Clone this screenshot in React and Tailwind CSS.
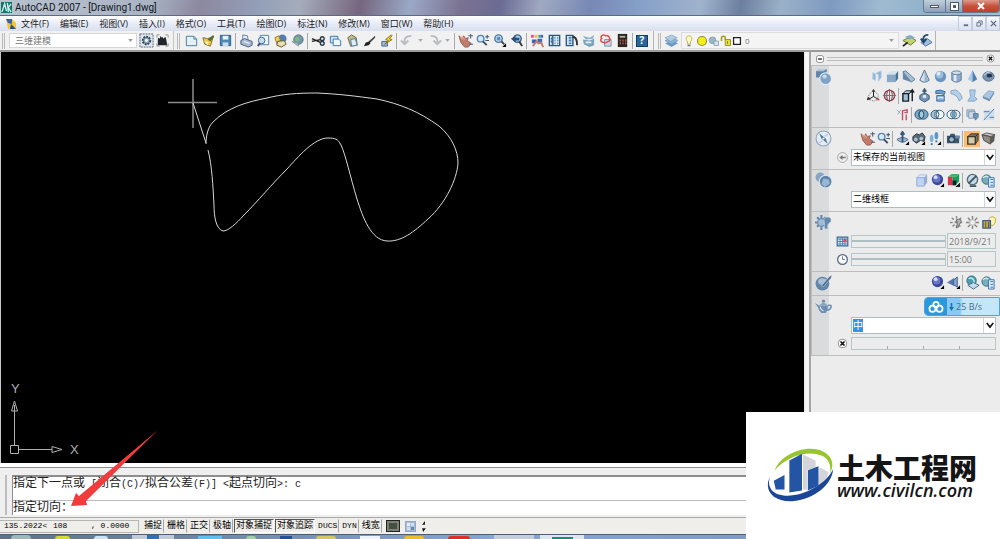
import React, { useState } from "react";
import clsx from "clsx";

/* 16x16 icon drawings, keyed by command */
const glyphs = {
  gear: (
    <>
      <rect x="1" y="1" width="14" height="14" fill="#dfe6ec" stroke="#50606e" strokeDasharray="2 1" />
      <circle cx="8" cy="8" r="4" fill="#8ba7bd" stroke="#2f4354" strokeWidth="2" strokeDasharray="2 1" />
      <circle cx="8" cy="8" r="1.500" fill="#fff" />
    </>
  ),
  workspace: (
    <>
      <path d="M2 5V2h3M11 2h3v3M14 11v3h-3M5 14H2v-3" fill="none" stroke="#8e979e" />
      <path d="M3 13V6l1-1 1 1 1-3 1 2 1-1 1 2 2-2 1 3 1 6z" fill="#20262b" />
    </>
  ),
  newFile: <path d="M2.500 3.500h8l3 3v7h-11z M10.500 3.500v3h3" fill="#e4f2f8" stroke="#477c9b" />,
  open: (
    <>
      <path d="M2 5l5 1 6-2-3 10-6-2z" fill="#efc84a" stroke="#80702c" />
      <path d="M7 7l6-5 1 2-4 5z" fill="#5a6d31" />
      <path d="M3 8l5 2-1 3z" fill="#fff3b5" />
    </>
  ),
  save: (
    <>
      <path d="M2.500 2.500h11v11h-11z" fill="#4f87b5" stroke="#2a5e8c" />
      <path d="M5 3h6v4H5z" fill="#eaf3f8" />
      <path d="M5 10h6v4H5z" fill="#c9dcea" />
    </>
  ),
  print: (
    <>
      <path d="M4 2l5 1 1 6-6-1z" fill="#e8eef7" stroke="#667da5" />
      <path d="M2 8l4-2 8 3v4l-4 2-8-3z" fill="#a9b9d4" stroke="#4a5d82" />
      <path d="M5 9l6 2" stroke="#fff" />
    </>
  ),
  preview: (
    <>
      <path d="M4.500 2.500h9v10h-9z" fill="#edf4fa" stroke="#4d7faa" />
      <circle cx="6" cy="8" r="3.500" fill="#c5dff0" stroke="#3b658e" />
      <path d="M4 11l-2 3" stroke="#3b4d65" strokeWidth="2" />
    </>
  ),
  publish: (
    <>
      <circle cx="10" cy="6" r="4.500" fill="#4f7eb7" />
      <path d="M2 5l4-2 2 5-4 3z" fill="#f4cd55" stroke="#9a7a28" />
      <path d="M5 9l7-1 2 4-5 3-5-2z" fill="#e6dfb0" stroke="#64552b" />
    </>
  ),
  globe: (
    <>
      <circle cx="9" cy="7" r="5" fill="#6f9bb0" stroke="#506d7a" />
      <path d="M6 4l4 1-1 4-4-1z" fill="#89b86e" />
      <path d="M2 9l6 2 1 3z" fill="#cdd6dc" stroke="#8b969e" />
    </>
  ),
  cut: (
    <>
      <path d="M1 9l9-2M1 6l9 4" stroke="#222" strokeWidth="1.500" />
      <circle cx="12" cy="6" r="2" fill="none" stroke="#28394c" strokeWidth="1.500" />
      <circle cx="12" cy="11" r="2" fill="none" stroke="#28394c" strokeWidth="1.500" />
    </>
  ),
  copy: (
    <>
      <path d="M2.500 3.500h8v7h-8z" fill="#cfe1f3" stroke="#3b75ab" />
      <path d="M5.500 6.500h6l2 2v5h-8z" fill="#edf6fc" stroke="#3b75ab" />
    </>
  ),
  paste: (
    <>
      <path d="M3 5l4-3 5 3 1 8-7 1z" fill="#c4ba84" stroke="#6c6750" />
      <path d="M6 7l5-1 2 7-6 1z" fill="#dceefa" stroke="#4b7aa0" />
    </>
  ),
  brush: (
    <>
      <path d="M14 3L7 9l1 2 6-6z" fill="#444" />
      <path d="M8 9l-4 1-2 4 5-1 2-2z" fill="#222" />
    </>
  ),
  blockEdit: (
    <>
      <path d="M3 9h6v5H3z" fill="#9db9d8" stroke="#45648c" />
      <path d="M13 2L7 7l3 1-4 4 8-5-3-1 3-3z" fill="#f5d633" stroke="#8a7310" />
    </>
  ),
  undo: <path d="M12 3C6 3 4 6 5 11M1 8l4 4 4-4" fill="none" stroke="#b9bdc1" strokeWidth="2" />,
  redo: <path d="M4 3c6 0 8 3 7 8M7 8l4 4 4-4" fill="none" stroke="#b9bdc1" strokeWidth="2" />,
  pan: (
    <>
      <path d="M1 3l4 3 1-3 2 3 3-1-1 3 4 3-3 4H7L3 10z" fill="#c07c6b" stroke="#9c6254" />
      <path d="M2 3l3 4M4 3l3 4" stroke="#e6bcae" />
      <path d="M11 3h5M13.500 1v5M12 12h4" stroke="#345a86" />
    </>
  ),
  zoom: (
    <>
      <circle cx="6" cy="6" r="3.500" fill="#d6e9f6" stroke="#5786b1" strokeWidth="1.500" />
      <path d="M8.500 9l4 4" stroke="#3c4b59" strokeWidth="2" />
      <path d="M11 4h4M13 2v4M11 8h4" stroke="#2f4b66" />
    </>
  ),
  zoomWindow: (
    <>
      <circle cx="7" cy="6" r="4" fill="#d6e9f6" stroke="#4676a4" strokeWidth="1.500" />
      <path d="M5 4h4v4H5z" fill="#668db5" />
      <path d="M10 9l3 3" stroke="#3c4b59" strokeWidth="2" />
      <path d="M15 11v4h-4z" />
    </>
  ),
  zoomPrev: (
    <>
      <circle cx="9" cy="6" r="4" fill="#a9cbe5" stroke="#3b628a" strokeWidth="1.500" />
      <path d="M11 9l3 5" stroke="#333" strokeWidth="2" />
      <path d="M2 6l5-3v2h4v3H7v2z" fill="#2b4d77" />
    </>
  ),
  properties: (
    <>
      <path d="M1 2h3v3H1z" fill="#e94b9a" />
      <path d="M5 2h3v3H5z" fill="#e8c530" />
      <path d="M9 2h2v3H9z" fill="#38a56b" />
      <path d="M11 2h3v3h-3z" fill="#3d68d0" />
      <path d="M2 7h5v4H2zM8 6h5v4H8z" fill="#4063b5" />
      <path d="M3 14l4-5 2 2 3-1 2 5" fill="none" stroke="#c07e70" strokeWidth="2" />
    </>
  ),
  designCenter: (
    <>
      <path d="M2.500 2.500h11v11h-11z" fill="#e7eff6" stroke="#2b587f" strokeWidth="1.500" />
      <path d="M6 3v10M8 5h1M11 5h1M8 8h1M11 8h1M8 11h1M11 11h1M4 6h1M4 9h1" stroke="#3a6a95" strokeWidth="2" />
    </>
  ),
  toolPalette: (
    <>
      <path d="M2.500 2.500h7v11h-7z" fill="#dceaf5" stroke="#2b587f" strokeWidth="1.500" />
      <path d="M5 5h3M5 8h3M5 11h3" stroke="#4c84b5" strokeWidth="2" />
      <path d="M9 4c4 0 5 3 5 9" fill="none" stroke="#333" strokeWidth="2" />
    </>
  ),
  sheetSet: (
    <>
      <path d="M2 3l7 2 5-3-1 4-8 1z" fill="#90b4cb" />
      <path d="M2 7l7 1 5-2v7l-5 2-6-3z" fill="#7ba4bb" />
      <path d="M5 10h6" stroke="#e4f0f6" strokeWidth="2" />
    </>
  ),
  markup: (
    <>
      <path d="M7 7h7v7H7z" fill="#ccd8e5" stroke="#7c8fa8" />
      <path d="M4 3c2-2 4 0 4 0s4-1 4 2c2 2 0 4-1 4s-3 3-5 1c-3 0-4-3-2-4-1-1-1-2 0-3z" fill="none" stroke="#dd4646" strokeWidth="1.500" />
    </>
  ),
  calc: (
    <>
      <path d="M3 1h10v14H3z" fill="#2d2522" />
      <path d="M5 3h6v2H5z" fill="#a8b79c" />
      <path d="M5 8h1M8 8h1M11 8h1M5 11h1M8 11h1M11 11h1" stroke="#e07c6a" strokeWidth="2" />
    </>
  ),
  layers: (
    <>
      <path d="M1 11l8-3 6 3-7 4z" fill="#6f9ac4" />
      <path d="M1 8l8-3 6 3-7 4z" fill="#8fb4d6" stroke="#5c83a9" strokeWidth=".5" />
      <path d="M1 5l7-3 6 3-7 4z" fill="#b0cde6" stroke="#5f86ab" strokeWidth=".5" />
    </>
  ),
  bulb: (
    <>
      <path d="M8 1C4 1 3 6 6 9v3h4V9c3-3 2-8-2-8z" fill="#fffbc3" stroke="#b7a33f" />
      <path d="M6 14h4" stroke="#6c7c90" strokeWidth="2" />
    </>
  ),
  sun: <circle cx="8" cy="8" r="6" fill="#f4ee1c" stroke="#928e35" strokeWidth="1.500" />,
  freeze: (
    <>
      <circle cx="6" cy="7" r="4.500" fill="#9db6c9" stroke="#7e96a9" />
      <path d="M8 8h6v6H8z" fill="#d7e4ec" stroke="#7e96a9" />
    </>
  ),
  unlock: (
    <>
      <path d="M2 8V4c0-3 5-3 5 0v3" fill="none" stroke="#a1a11d" strokeWidth="2" />
      <path d="M7 6h7v8H7z" fill="#e6e12a" stroke="#807d1b" />
      <path d="M10 8v4" stroke="#666" />
    </>
  ),
  square: <path d="M2.500 2.500h11v11h-11z" fill="#fff" stroke="#222" strokeWidth="2" />,
  layerCurrent: (
    <>
      <path d="M1 8l8-4 6 4-6 5z" fill="#c5d36a" stroke="#6a7b38" />
      <path d="M3 4l6-2 5 3-6 2z" fill="#86a9c6" />
      <path d="M1 14l5-4" stroke="#222" strokeWidth="2" />
    </>
  ),
  layerPrev: (
    <>
      <path d="M3 10l7-4 5 4-7 4z" fill="#9dbfdf" stroke="#4c7299" />
      <path d="M11 2C6 2 5 5 6 9M3 6l3 4 3-4" fill="none" stroke="#20466f" strokeWidth="2" />
    </>
  ),
  polysolid: <path d="M4 4l3 1v7l-3-1zM8 4l5-2v7l-3 4V6L8 5z" fill="#8fb3da" stroke="#b7cfe6" />,
  box: (
    <>
      <path d="M2 6l4-4h8l-3 4z" fill="#d3e3f0" />
      <path d="M11 6l3-4v8l-3 4z" fill="#4b6f94" />
      <path d="M2 6h9v8H2z" fill="#89a9c7" />
    </>
  ),
  wedge: (
    <>
      <path d="M2 3l3-1 10 9-4 3z" fill="#a7c0d4" stroke="#5e7c98" />
      <path d="M2 3v8l9 3z" fill="#6788a8" />
    </>
  ),
  cone: (
    <>
      <path d="M8 1L3 12q5 4 10 0z" fill="#d4e2ed" stroke="#4c6a86" />
      <path d="M8 2v12l4-2z" fill="#9bb5cb" />
    </>
  ),
  sphere: (
    <>
      <circle cx="8" cy="8" r="6" fill="#6b94bf" />
      <circle cx="7" cy="6" r="4" fill="#9bbcdc" />
      <circle cx="6" cy="5" r="2" fill="#dceaf6" />
    </>
  ),
  cylinder: (
    <>
      <path d="M3 4v8q5 4 10 0V4z" fill="#8fadca" stroke="#5f7e9d" />
      <path d="M5 5v8h3V5z" fill="#dde9f3" />
      <ellipse cx="8" cy="4" rx="5" ry="2" fill="#cfdeea" stroke="#5f7e9d" />
    </>
  ),
  pyramid: (
    <>
      <path d="M8 1L3 11l5 3z" fill="#a8cbea" />
      <path d="M8 1v13l5-3z" fill="#4f80b2" />
    </>
  ),
  torus: (
    <>
      <ellipse cx="8" cy="8" rx="6" ry="5" fill="#7894b0" stroke="#54718e" />
      <ellipse cx="9" cy="7" rx="3" ry="2" fill="#24384c" />
      <path d="M3 7q3-4 7-4" stroke="#d7e3ee" fill="none" />
    </>
  ),
  ucs: (
    <>
      <path d="M8 9V3M8 9l-5 3M8 9l5 3" stroke="#1c1c1c" />
      <path d="M6 4l2-3 2 3zM1 13l1-4 3 3z" fill="#1c1c1c" />
      <path d="M11 13l1-3 3 3z" fill="#c33" />
      <path d="M3 7l5-4 5 4v5l-5 2-5-2z" fill="none" stroke="#777" strokeDasharray="1 1" />
    </>
  ),
  orbit3d: (
    <>
      <circle cx="8" cy="8" r="5.500" fill="none" stroke="#a43b4b" strokeWidth="1.500" />
      <ellipse cx="8" cy="8" rx="3" ry="6" fill="none" stroke="#34495e" />
      <path d="M1 8h14M8 1v14" stroke="#bb4d5c" />
    </>
  ),
  extrude: (
    <>
      <path d="M2 6l3-3h6L9 6z" fill="#bad0e4" stroke="#16202b" />
      <path d="M2 6h6v8H2z" fill="#a5c0d9" stroke="#16202b" strokeWidth="1.500" />
      <path d="M12 14V3M10 5l2-3 2 3" fill="none" stroke="#16202b" strokeWidth="1.500" />
    </>
  ),
  presspull: (
    <>
      <path d="M3 8l5-3 5 3v4l-5 3-5-3z" fill="#7193b4" stroke="#3d5c7b" />
      <path d="M8 9V2M6 4l2-3 2 3" fill="none" stroke="#3d5c7b" strokeWidth="1.500" />
      <circle cx="8" cy="9" r="2" fill="#d8e5f0" />
    </>
  ),
  sweep: (
    <>
      <path d="M3 3q5-2 10 1l-1 3q-4-2-9-1z" fill="#6fa2d4" stroke="#3a6c9d" />
      <path d="M4 8h8v6H4z" fill="#86b1dc" stroke="#3a6c9d" />
      <path d="M5 11q3-2 6 0" fill="none" stroke="#e4eef8" strokeWidth="1.500" />
    </>
  ),
  revolve: <path d="M2 3l5-1q6 3 7 9l-3 3Q9 7 2 6z" fill="#b4cfe6" stroke="#84a4c3" />,
  loft: <path d="M5 2h6l-1 7 3 3-3 2H3l3-5z" fill="#a9cbe8" stroke="#82a7ca" />,
  planar: (
    <>
      <path d="M2 9l6-6 6 1-5 8z" fill="#a9c6e4" stroke="#86a5c7" />
      <path d="M2 9v2l7 3 5-8V4l-5 8z" fill="#6d8fb3" />
    </>
  ),
  section: (
    <>
      <path d="M2 3l4 4M6 3L3 8" stroke="#8eacc9" />
      <path d="M8 14V4l5-1v3h-3M12 8v6" fill="none" stroke="#c3516d" strokeWidth="1.500" />
    </>
  ),
  union: (
    <>
      <ellipse cx="6" cy="8" rx="5" ry="5" fill="#7ba8c2" stroke="#1f4f6c" />
      <ellipse cx="10" cy="8" rx="5" ry="5" fill="#7ba8c2" stroke="#1f4f6c" />
      <ellipse cx="8" cy="8" rx="2.500" ry="4" fill="#a9c9da" stroke="#1f4f6c" />
    </>
  ),
  subtract: (
    <>
      <ellipse cx="6" cy="8" rx="5" ry="4.500" fill="#a5c3d4" stroke="#2a5a78" />
      <ellipse cx="10" cy="8" rx="5" ry="4.500" fill="#f3f6f8" stroke="#2a5a78" />
      <path d="M8 4q-3 4 0 8 3-4 0-8z" fill="none" stroke="#2a5a78" />
    </>
  ),
  intersect: (
    <>
      <ellipse cx="6" cy="8" rx="5" ry="4.500" fill="#f3f6f8" stroke="#2a5a78" />
      <ellipse cx="10" cy="8" rx="5" ry="4.500" fill="none" stroke="#2a5a78" />
      <ellipse cx="8" cy="8" rx="2" ry="3.500" fill="#6d9cb7" />
    </>
  ),
  flatshot: (
    <>
      <path d="M2 3h8v7H2z" fill="#b4c7da" stroke="#8aa1b9" />
      <path d="M4 5h7v7H4z" fill="#cddceb" stroke="#7f9cb8" />
      <path d="M9 7h5v4l-3 3v-3H9z" fill="#7399bd" stroke="#5c7b99" />
    </>
  ),
  sectionPlane: (
    <>
      <path d="M3 3h11v11H3z" fill="#cfdff0" />
      <path d="M14 2L3 14M3 5h6M9 11h5" stroke="#4978a6" />
    </>
  ),
  orbit: (
    <>
      <path d="M2 9q6-4 12 0-6 6-12 0z" fill="#9fb8cf" stroke="#4a6b8a" />
      <path d="M8 1v11M6 4l2-3 2 3" fill="none" stroke="#35597c" strokeWidth="2" />
      <path d="M15 11v4h-4z" />
    </>
  ),
  walk: (
    <>
      <path d="M2 6l4-3 3 1 3-2 3 4-1 5-4-1-4 3-4-3z" fill="#5d6976" stroke="#2c3338" />
      <circle cx="5" cy="9" r="2" fill="#aac0d3" />
      <circle cx="11" cy="8" r="2" fill="#aac0d3" />
      <path d="M15 11v4h-4z" />
    </>
  ),
  steps: (
    <>
      <ellipse cx="5" cy="8" rx="2" ry="4" fill="#7fb1dd" />
      <ellipse cx="10" cy="5" rx="2" ry="4" fill="#5d97ca" />
      <path d="M4 14h2M9 11h2" stroke="#3972a7" strokeWidth="2" />
      <path d="M15 11v4h-4z" />
    </>
  ),
  camera: (
    <>
      <path d="M1 5h3l1-2h4l1 2h4v8H1z" fill="#39566d" />
      <circle cx="6" cy="9" r="3" fill="#9ab5ca" stroke="#132838" />
      <path d="M10 5h5v3h-5z" fill="#728da3" />
    </>
  ),
  parallel: (
    <>
      <path d="M3 6l3-3h8l-3 3zM11 6l3-3v7l-3 4z" fill="#7c705f" stroke="#3d382f" />
      <path d="M3 6h8v8H3z" fill="#d4c9a9" stroke="#3d382f" strokeWidth="1.500" />
    </>
  ),
  perspective: (
    <>
      <path d="M1 4l5-2 9 2-5 2z" fill="#c4c1ba" stroke="#5c5b57" />
      <path d="M1 4l9 2v8l-7-4z" fill="#8f8c86" stroke="#4b4a46" />
      <path d="M10 6l5-2-1 7-4 3z" fill="#5d5a55" />
    </>
  ),
  arrowLeft: (
    <>
      <circle cx="8" cy="8" r="6" fill="#efefef" stroke="#999" />
      <path d="M4 8l4-3v2h4v2H8v2z" fill="#777" />
    </>
  ),
  cubeLight: (
    <>
      <path d="M3 5l3-3h8l-3 3z" fill="#dfe9fa" stroke="#a7bce4" />
      <path d="M11 5l3-3v8l-3 4z" fill="#93acd9" />
      <path d="M3 5h8v9H3z" fill="#c2d4f2" stroke="#91aade" />
    </>
  ),
  ballBlue: (
    <>
      <circle cx="8" cy="7" r="6" fill="#3a489b" />
      <circle cx="7" cy="6" r="4" fill="#6877c4" />
      <circle cx="6" cy="4.500" r="2" fill="#d5dbfa" />
      <path d="M15 11v4h-4z" />
    </>
  ),
  cubeRgb: (
    <>
      <path d="M2 4l4-3h8l-3 3z" fill="#3bb36a" />
      <path d="M2 4h5v9H2z" fill="#d4364d" />
      <path d="M7 4h4l3-3v8l-4 4H7z" fill="#1a9d59" />
      <path d="M7 8h4v5H7zM15 10v5h-5z" fill="#141e26" />
    </>
  ),
  noFace: (
    <>
      <circle cx="8" cy="7" r="5.500" fill="#c9dae5" stroke="#54707f" strokeWidth="1.500" />
      <path d="M4 11l8-8M5 14h7" stroke="#3f5865" strokeWidth="2" />
    </>
  ),
  globeList: (
    <>
      <circle cx="6" cy="7" r="5" fill="#77adba" stroke="#356a79" />
      <path d="M2 5q4-3 6 0t2 4" fill="none" stroke="#cde9ea" strokeWidth="1.500" />
      <path d="M8 5h6v10H8z" fill="#dceaf7" stroke="#3a76ac" />
      <path d="M10 7h3M10 10h3M10 13h3" stroke="#3a76ac" />
    </>
  ),
  lightGrey: (
    <>
      <path d="M8 1v14M1 8h14M3 3l10 10M13 3L3 13" stroke="#8a8a8a" strokeWidth="1.500" strokeDasharray="3 2" />
      <path d="M8 5q5-2 5 2l-2 3-1 3H8l1-4z" fill="#b8b8b8" stroke="#666" />
    </>
  ),
  sunGrey: (
    <>
      <path d="M8 1v14M1 8h14M3 3l10 10M13 3L3 13" stroke="#858585" strokeWidth="1.500" strokeDasharray="4 1" />
      <circle cx="8" cy="8" r="3" fill="#efefef" stroke="#b5b5b5" />
    </>
  ),
  lightList: (
    <>
      <path d="M9 9q-2-7 3-7t3 6l-2 3h-3z" fill="#fff7b1" stroke="#c0aa2b" />
      <path d="M2 6h8v8H2z" fill="#c8a83c" stroke="#435f7c" strokeWidth="1.500" />
      <path d="M5 7v7M8 7v7" stroke="#435f7c" />
    </>
  ),
  calendar: (
    <>
      <path d="M1.500 2.500h13v11h-13z" fill="#e1edf7" stroke="#3b6896" strokeWidth="1.500" />
      <path d="M2 5h12M2 8h12M2 11h12M5 3v10M8 3v10M11 3v10" stroke="#3f76aa" />
      <path d="M9 5h4v4H9z" fill="#d44e5e" />
    </>
  ),
  clock: (
    <>
      <circle cx="8" cy="8" r="6" fill="#f8f9fb" stroke="#56687f" strokeWidth="1.500" />
      <path d="M8 4v4h3" fill="none" stroke="#56687f" />
    </>
  ),
  mapping: (
    <>
      <path d="M1 8l8-5v9z" fill="#5779af" />
      <path d="M8 6l4-4v11l-4-3z" fill="#8ca7cf" stroke="#3d5b8b" />
      <path d="M15 11v4h-4z" />
    </>
  ),
  globeLayers: (
    <>
      <circle cx="7" cy="6" r="5" fill="#4c9bad" stroke="#2d6d83" />
      <path d="M4 4q3-2 5 1t-1 4" fill="none" stroke="#c5edee" strokeWidth="1.500" />
      <path d="M3 11l6-3 6 3-6 4z" fill="#c6dced" stroke="#436b8a" />
    </>
  ),
  closeRound: (
    <>
      <rect x="3" y="3" width="10" height="10" rx="4" fill="#fff" stroke="#777" />
      <path d="M5.500 5.500l5 5M10.500 5.500l-5 5" stroke="#111" strokeWidth="2" />
    </>
  ),
  minusRound: (
    <>
      <rect x="2.500" y="2.500" width="11" height="11" rx="3" fill="#fff" stroke="#555" />
      <path d="M5 8h6" stroke="#111" strokeWidth="2" />
    </>
  ),
  catSolids: (
    <>
      <path d="M1 3l3-2h7v6L8 9H1z" fill="#5f84aa" />
      <path d="M1 3l3-2h7L8 3z" fill="#b1c8dd" />
      <circle cx="10" cy="10" r="5.500" fill="#7fa2c5" stroke="#e6edf4" />
      <circle cx="9" cy="8" r="2" fill="#c9dbea" />
    </>
  ),
  catCompass: (
    <>
      <circle cx="8" cy="8" r="7" fill="#e4ebf2" stroke="#8ba5bf" />
      <path d="M4 3l6 5 2 5-6-5z" fill="#4f7398" />
      <path d="M12 4L9 6M4 12l3-2" stroke="#b3c4d5" />
      <circle cx="8" cy="8" r="1" fill="#fff" />
    </>
  ),
  catVisual: (
    <>
      <circle cx="5" cy="5" r="4.500" fill="#86a5c4" />
      <circle cx="10" cy="9" r="6" fill="#5e83a9" stroke="#dfe8f0" />
      <path d="M8 6l5 1 1 4-5 3-3-3z" fill="#9ab7d2" />
    </>
  ),
  catLight: (
    <>
      <path d="M6 1v14M0 8h11M2 3l8 9M10 3l-8 9" stroke="#6588ac" strokeWidth="2" />
      <circle cx="6" cy="8" r="3.500" fill="#a2bcd5" stroke="#6588ac" />
      <path d="M10 3q6-1 5 4l-3 3v4H9V8q-2-3 1-5z" fill="#6588ac" stroke="#d6e2ed" strokeWidth=".5" />
    </>
  ),
  catMaterial: (
    <>
      <circle cx="7" cy="9" r="6.500" fill="#6285a8" />
      <ellipse cx="7" cy="7" rx="4" ry="3" fill="#a6c0d8" />
      <path d="M6 11l8-9 2-1-1 3-7 8z" fill="#486c91" stroke="#d9e4ee" strokeWidth=".5" />
    </>
  ),
  catRender: (
    <>
      <path d="M0 5l4 2h8v4l-2 3H6Q3 12 3 9z" fill="#6c8fb2" />
      <path d="M12 7q4-1 3 2t-4 2" fill="none" stroke="#6c8fb2" strokeWidth="1.500" />
      <path d="M4 7q4-5 8 0z" fill="#86a4c2" />
      <circle cx="8" cy="3" r="1.500" fill="#6c8fb2" />
      <path d="M5 8q0 3 3 4" stroke="#dbe6f0" fill="none" />
    </>
  ),
};

function Icon({ name, className = "size-[15px]" }) {
  return (
    <svg viewBox="0 0 16 16" className={clsx("shrink-0", className)} aria-hidden="true">
      {glyphs[name]}
    </svg>
  );
}

function IconRow({ items, active }) {
  return items.map((n, i) => {
    if (n === "|") return <span key={i} className="mx-px h-4 w-px shrink-0 bg-[#a9a9a9]" />;
    if (n === "v") {
      return (
        <button key={i} aria-label="history" className="flex w-[9px] justify-center">
          <svg viewBox="0 0 6 4" className="h-[3px] w-[5px]"><path d="M0 0h6L3 4z" fill="#aaa" /></svg>
        </button>
      );
    }
    return (
      <button
        key={i}
        aria-label={n}
        className={clsx("flex h-4 w-4 shrink-0 items-center justify-center", n === active && "bg-[#fbbd6b]")}
      >
        <Icon name={n} />
      </button>
    );
  });
}

function Grip() {
  return <span className="mx-[2px] h-4 w-[3px] shrink-0 border-x border-[#b9b9b9]" />;
}

const MENUS = [
  "文件(F)", "编辑(E)", "视图(V)", "插入(I)", "格式(O)", "工具(T)",
  "绘图(D)", "标注(N)", "修改(M)", "窗口(W)", "帮助(H)",
];

function TitleBar() {
  return (
    <header className="flex h-[15px] shrink-0 items-center bg-[linear-gradient(100deg,#b9c2cf_0%,#a9b3c3_15%,#8c88a0_20%,#93a0b8_26%,#a5acbb_30%,#76667f_36%,#9aa9c6_41%,#7c7292_46%,#6b6b94_50%,#a0a9c2_54%,#7788b4_59%,#86a0c8_64%,#a0b3cd_70%,#6d7f9f_74%,#9bb1c9_78%,#7e9ac0_83%,#9fbad0_88%,#90b2cc_93%,#a3bdd4_100%)] text-[#10161c]">
      <svg viewBox="0 0 12 12" className="mr-[3px] ml-px size-[11px]">
        <path d="M0 0h12v12H0z" fill="#13746c" />
        <path d="M1 11L4 2l2 8M7 1l1 10M11 2L8 6l3 5" fill="none" stroke="#c9efe8" strokeWidth="1.500" />
      </svg>
      <h1 className="font-['Roboto'] text-[10px]">AutoCAD 2007 - [Drawing1.dwg]</h1>
      <div className="ml-auto flex h-[13px] self-start overflow-hidden rounded-b border border-t-0 border-[#66788f]">
        <button aria-label="minimize" className="flex w-[21px] items-center justify-center bg-linear-to-b from-[#c3cfdb] to-[#8ba0b8]">
          <span className="h-[3px] w-[9px] border border-[#4c5a6a] bg-white" />
        </button>
        <button aria-label="restore" className="flex w-[18px] items-center justify-center border-x border-[#66788f] bg-linear-to-b from-[#c3cfdb] to-[#8ba0b8]">
          <span className="size-[7px] border-2 border-white bg-[#4c5a6a] outline outline-[#4c5a6a]" />
        </button>
        <button aria-label="close" className="flex w-[36px] items-center justify-center bg-linear-to-b from-[#dd9a8c] via-[#c8503a] to-[#c43d26]">
          <svg viewBox="0 0 8 8" className="size-[8px]"><path d="M1 1l6 6M7 1L1 7" stroke="#fff" strokeWidth="2" /></svg>
        </button>
      </div>
    </header>
  );
}

function MenuBar() {
  return (
    <nav className="flex h-4 shrink-0 items-center border-t border-[#5d6b80] bg-linear-to-b from-white via-[#e7ecf7] to-[#d8dfee] text-[9px] text-[#1b1b1b]">
      <svg viewBox="0 0 12 12" className="mr-1 ml-[5px] size-[12px]">
        <path d="M1 1h6l4 4v6H3z" fill="#f3c63a" />
        <path d="M1 1h6v5L3 5z" fill="#3463a6" />
        <path d="M5 11l1-5 5 5z" fill="#244f91" />
      </svg>
      <div className="flex gap-[11px]">
        {MENUS.map((m) => (
          <button key={m} className="whitespace-nowrap">{m}</button>
        ))}
      </div>
      <div className="ml-auto flex h-full text-[#5a6a80]">
        <button aria-label="minimize drawing" className="flex w-[14px] items-center justify-center border border-[#c3ccdc]">
          <svg viewBox="0 0 8 8" className="size-[7px]"><path d="M2 6h5" stroke="currentColor" strokeWidth="2" /></svg>
        </button>
        <button aria-label="restore drawing" className="flex w-[14px] items-center justify-center border border-[#c3ccdc]">
          <svg viewBox="0 0 8 8" className="size-[7px]"><path d="M3 2V1h4v4H6M1 3h4v4H1z" fill="none" stroke="currentColor" /></svg>
        </button>
        <button aria-label="close drawing" className="flex w-[14px] items-center justify-center border border-[#c3ccdc]">
          <svg viewBox="0 0 8 8" className="size-[7px]"><path d="M1 1l6 6M7 1L1 7" stroke="currentColor" strokeWidth="1.500" /></svg>
        </button>
      </div>
    </nav>
  );
}

function SmallArrow() {
  return (
    <svg viewBox="0 0 6 4" className="pointer-events-none absolute top-[6px] right-1 h-[3px] w-[5px]">
      <path d="M0 0h6L3 4z" fill="#999" />
    </svg>
  );
}

function Toolbar() {
  return (
    <div className="flex h-[21px] shrink-0 items-center border-b-2 border-[#9b9b9b] bg-[#f1f1f1]">
      <Grip />
      <div className="relative mr-px ml-[2px]">
        <select aria-label="工作空间" className="block h-[15px] w-[128px] appearance-none border border-[#d6d6d6] bg-white pl-[5px] text-[9px] leading-3 text-[#777]">
          <option>三维建模</option>
        </select>
        <SmallArrow />
      </div>
      <IconRow items={["gear", "workspace"]} />
      <span className="mr-px ml-[3px] h-full border-r border-[#c4c4c4]" />
      <Grip />
      <div className="ml-px flex items-center gap-px">
        <IconRow
          items={[
            "newFile", "open", "save", "|", "print", "preview", "publish", "globe", "|",
            "cut", "copy", "paste", "brush", "blockEdit", "|", "undo", "v", "redo", "v", "|",
            "pan", "zoom", "zoomWindow", "zoomPrev", "|", "properties", "designCenter",
            "toolPalette", "sheetSet", "markup", "calc", "|",
          ]}
        />
        <button aria-label="help" className="mx-px flex size-[12px] items-center justify-center border border-[#123c61] bg-[#2a6798] text-[10px] font-bold text-white">
          ?
        </button>
      </div>
      <span className="mr-[2px] ml-1 h-full border-r border-[#b4b4b4]" />
      <Grip />
      <IconRow items={["layers"]} />
      <div className="relative mx-[2px] flex h-[17px] w-[218px] items-center border border-[#dcdcdc] bg-[#f4f4f4] px-px">
        <Icon name="bulb" className="mr-px size-[12px]" />
        <Icon name="sun" className="size-[12px]" />
        <Icon name="freeze" className="size-[12px]" />
        <Icon name="unlock" className="size-[12px]" />
        <Icon name="square" className="mr-px size-[10px]" />
        <select aria-label="图层" className="min-w-0 flex-1 appearance-none pl-[2px] text-[8px] text-[#777]">
          <option>0</option>
        </select>
        <SmallArrow />
      </div>
      <IconRow items={["layerCurrent", "layerPrev"]} />
      <span className="ml-[2px] h-full border-r border-[#b4b4b4]" />
    </div>
  );
}

function Canvas() {
  return (
    <main className="relative min-w-0 flex-1 overflow-hidden border-r border-[#e8e8e8] bg-black">
      <svg viewBox="1 0 480 220" width="480" height="220" className="block" fill="none" stroke="#d8d8d8">
        <path d="M193 27v49M168 50.500h49" stroke="#8c8c8c" strokeWidth="1.500" />
        <path d="M193 51l13 40" />
        <path d="M206 92c0-6 1-16 7-22 15-15 34-20 54-24 16-4 30-5 50-5 22 1 38 3 60 6 23 5 41 12 62 27 13 11 19 25 19 37-1 16-12 40-30 56-14 13-27 23-41 22-16-1-24-23-30-42-7-23-11-43-16-54-3-6-6-7-13-7-14 0-30 19-41 31-14 14-30 33-43 46-8 9-16 16-21 16-7-2-9-14-9-26-1-18-2-40-6-55" />
      </svg>
      <svg viewBox="0 -10 90 90" width="90" height="90" className="absolute bottom-0 left-[5px]" fill="none" stroke="#b0b0b0">
        <path d="M8.500 62V22M12 66.500h34M4.500 62.500h8v8h-8zM8.500 18l-3 10h6zM56 66.500l-10-3v6z" />
        <text x="5" y="10" fill="#b0b0b0" stroke="none" className="font-['Liberation_Sans'] text-[13px]">Y</text>
        <text x="64" y="71" fill="#b0b0b0" stroke="none" className="font-['Liberation_Sans'] text-[13px]">X</text>
      </svg>
    </main>
  );
}

function Section({ icon, children }) {
  return (
    <section className="flex border-b border-[#bdbdbd]">
      <div className="w-[17px] shrink-0 bg-[#dadbdd] pt-[2px]">
        <Icon name={icon} className="ml-[3px] size-[17px]" />
      </div>
      <div className="min-w-0 flex-1 pt-px pb-[3px] pr-1">{children}</div>
    </section>
  );
}

function Row({ items, active }) {
  return (
    <div className="flex h-[19px] items-center justify-end">
      <IconRow items={items} active={active} />
    </div>
  );
}

/* one line: small icon on the left, control on the right */
function Field({ icon, children }) {
  return (
    <div className="flex h-[18px] items-center gap-px pl-[6px]">
      <span className="flex w-[15px] shrink-0 justify-center">{icon && <Icon name={icon} className="size-[13px]" />}</span>
      {children}
    </div>
  );
}

function Chevron() {
  return (
    <svg viewBox="0 0 10 8" className="h-[7px] w-[8px]"><path d="M1 1l4 5 4-5" fill="none" stroke="#111" strokeWidth="2" /></svg>
  );
}

function Combo({ label, value }) {
  return (
    <div className="relative min-w-0 flex-1">
      <select aria-label={label} className="block h-[17px] w-full appearance-none border border-[#aebfc3] bg-white pl-px text-[9px] text-black">
        <option>{value}</option>
      </select>
      <span className="pointer-events-none absolute inset-y-px right-px flex w-[11px] items-center justify-center border-l border-[#cfd8da]">
        <Chevron />
      </span>
    </div>
  );
}

function Slider({ label, ticks }) {
  return (
    <div className="relative flex h-[13px] min-w-0 flex-1 items-center border border-[#b4c6c6] bg-[#ececec]">
      <input type="range" aria-label={label} className="absolute inset-0 w-full opacity-0" />
      {ticks ? (
        <div className="flex h-full flex-1 items-end justify-evenly">
          <i className="h-[3px] w-px bg-[#aaa]" />
          <i className="h-[3px] w-px bg-[#aaa]" />
          <i className="h-[3px] w-px bg-[#aaa]" />
        </div>
      ) : (
        <div className="h-[2px] flex-1 bg-[#aebfc3]" />
      )}
    </div>
  );
}

function Dashboard() {
  const [text, setText] = useState("中");
  return (
    <aside className="w-[195px] shrink-0 border-l border-[#f6f6f6] bg-[#ececec] pl-[5px] shadow-[inset_3px_0_0_#f6f6f6,inset_5px_0_0_#a6a6a6]">
      <div className="flex h-[14px] items-center gap-[2px] border-b border-[#bdbdbd] px-[4px]">
        <button aria-label="collapse"><Icon name="minusRound" className="size-[10px]" /></button>
        <span className="h-[4px] flex-1 border-y border-[#bcbcbc]" />
        <button aria-label="close dashboard"><Icon name="closeRound" className="size-[11px]" /></button>
      </div>
      <div className="border-l border-[#bdbdbd]">
        <Section icon="catSolids">
          <Row items={["polysolid", "box", "wedge", "cone", "sphere", "cylinder", "pyramid", "torus"]} />
          <Row items={["ucs", "orbit3d", "|", "extrude", "presspull", "sweep", "revolve", "loft", "planar"]} />
          <Row items={["section", "|", "union", "subtract", "intersect", "|", "flatshot", "sectionPlane"]} />
        </Section>
        <Section icon="catCompass">
          <Row items={["pan", "zoom", "|", "orbit", "walk", "steps", "|", "camera", "|", "parallel", "perspective"]} active="parallel" />
          <Field icon="arrowLeft"><Combo label="视图" value="未保存的当前视图" /></Field>
        </Section>
        <Section icon="catVisual">
          <Row items={["cubeLight", "ballBlue", "cubeRgb", "|", "noFace", "globeList"]} />
          <Field><Combo label="视觉样式" value="二维线框" /></Field>
        </Section>
        <Section icon="catLight">
          <Row items={["lightGrey", "sunGrey", "lightList"]} />
          <Field icon="calendar">
            <Slider label="日期" />
            <input aria-label="日期值" defaultValue="2018/9/21" className="h-4 w-[49px] border border-[#b4c6c6] pl-px text-[9px] text-[#777]" />
          </Field>
          <Field icon="clock">
            <Slider label="时间" />
            <input aria-label="时间值" defaultValue="15:00" className="h-4 w-[49px] border border-[#b4c6c6] pl-px text-[9px] text-[#777]" />
          </Field>
        </Section>
        <Section icon="catMaterial">
          <Row items={["ballBlue", "mapping", "|", "globeLayers", "globeList"]} />
        </Section>
        <Section icon="catRender">
          <div className="-mr-1 flex h-[19px] justify-end">
            <div className="flex w-[76px] overflow-hidden rounded-l-sm border border-[#4ba4dc] text-[9px] text-[#4b6c84]">
              <span className="flex w-[22px] items-center justify-center bg-[#2d97dc]">
                <svg viewBox="0 0 18 16" className="h-[14px] w-4" fill="none" stroke="#fff" strokeWidth="2">
                  <circle cx="9" cy="5" r="3" />
                  <circle cx="5" cy="10" r="3.500" />
                  <circle cx="13" cy="10" r="3.500" />
                </svg>
              </span>
              <span className="flex flex-1 items-center gap-[2px] bg-linear-to-r from-[#85caf3] from-25% to-[#c4e6fb] to-30% pl-[2px]">
                <svg viewBox="0 0 6 10" className="h-[8px] w-[5px]"><path d="M2 0h2v5h2L3 10 0 5h2z" fill="#1e73ac" /></svg>
                25 B/s
              </span>
            </div>
          </div>
          <Field>
            <div className="flex h-[17px] flex-1 items-center border border-[#aebfc3] bg-white pl-px">
              <input
                aria-label="渲染预设"
                value={text}
                onChange={(e) => setText(e.target.value)}
                className="h-[13px] w-[10px] bg-[#3392ec] text-[10px] text-white"
              />
              <button aria-label="展开" className="ml-auto flex h-full w-[12px] items-center justify-center border-l border-[#cfd8da]"><Chevron /></button>
            </div>
          </Field>
          <Field icon="closeRound"><Slider label="进度" ticks /></Field>
        </Section>
      </div>
    </aside>
  );
}

/* CJK glyphs are drawn larger than the latin ones in the console font */
function Mono({ children }) {
  return children.split(/([\u4e00-\u9fff：]+)/).map((s, i) => (
    <span key={i} className={i % 2 ? "text-[12px]" : "text-[10px]"}>{s}</span>
  ));
}

function CommandLine() {
  return (
    <div className="flex shrink-0 border-t-4 border-white bg-[#efefef] font-['Liberation_Mono','Noto_Sans_CJK_SC',monospace] leading-3 text-[#222]">
      <div className="flex flex-1 border-t border-[#8d8d8d] pt-[7px] pb-[2px]">
        <span className="mx-[5px] w-[2px] border-x border-[#bdbdbd]" />
        <div className="flex-1 border-t-2 border-l border-[#8d8d8d] bg-white">
          <div className="h-[23px] whitespace-pre">
            <Mono>{"指定下一点或 [闭合(C)/拟合公差(F)] <起点切向>: c"}</Mono>
          </div>
          <label className="flex h-[15px] items-center border-t border-[#bdbdbd]">
            <Mono>指定切向：</Mono>
            <input className="min-w-0 flex-1 text-[10px] outline-none" />
          </label>
        </div>
      </div>
    </div>
  );
}

const MODES = [
  { label: "捕捉" },
  { label: "栅格" },
  { label: "正交" },
  { label: "极轴" },
  { label: "对象捕捉", on: true },
  { label: "对象追踪", on: true },
  { label: "DUCS" },
  { label: "DYN" },
  { label: "线宽" },
];

function StatusBar() {
  const [modes, setModes] = useState(MODES);
  const toggle = (i) => setModes((s) => s.map((m, k) => (k === i ? { ...m, on: !m.on } : m)));

  return (
    <div className="flex h-[17px] shrink-0 items-center border-t border-[#a9a9a9] bg-[#f0eeeb] font-['Liberation_Mono','Noto_Sans_CJK_SC',monospace] text-[9px] text-black">
      <div className="mr-[3px] flex h-[13px] w-[139px] items-center border border-l-0 border-[#b5b5b5] pl-1 text-[8px]">
        <span className="w-[49px]">135.2022&lt;</span>
        <span className="w-[38px]">108</span>
        <span>, 0.0000</span>
      </div>
      {modes.map((m, i) => (
        <button
          key={m.label}
          onClick={() => toggle(i)}
          className={clsx(
            "mr-px h-[14px] border px-px leading-3 whitespace-nowrap",
            m.on ? "border-[#555] border-r-white border-b-white" : "border-transparent border-r-[#a5a5a5]",
            m.label.startsWith("D") && "text-[8px]"
          )}
        >
          {m.label}
        </button>
      ))}
      <button aria-label="模型" className="ml-[3px] flex h-[12px] w-[14px] items-center justify-center border border-[#222] bg-[#7c8076]">
        <span className="h-[6px] w-[8px] bg-[#43503e]" />
      </button>
      <button aria-label="布局" className="ml-[5px] grid h-[11px] w-[11px] grid-cols-2 gap-px border border-[#8ea8c6] bg-[#a9bdd6] p-px">
        <i className="bg-[#e7effa]" /><i className="bg-[#cfddef]" /><i className="bg-[#cfddef]" /><i className="bg-[#6889b3]" />
      </button>
      <svg viewBox="0 0 6 12" className="ml-[5px] h-[11px] w-[6px]"><path d="M1 4l3-4v4zM1 8h4L2 12z" fill="#111" /></svg>
    </div>
  );
}

function Taskbar() {
  return (
    <footer className="flex h-[5px] shrink-0 items-end gap-[24px] border-t border-[#4e5f78] bg-linear-to-r from-[#5f7388] via-[#86a6d4] to-[#7891b5] pl-[11px]">
      <i className="h-full w-[20px] rounded-t-full bg-[#9db9ba]" />
      <i className="h-[3px] w-[15px] rounded-t-full bg-[#d6da34]" />
      <i className="h-[3px] w-[14px] rounded-t-full bg-[#c8e4f5]" />
      <span className="flex h-full w-[42px] justify-center bg-[#c1cad5]"><i className="w-[12px] bg-[#2e72b5]" /></span>
      <i className="h-[3px] w-[24px] bg-[#5fc1f1]" />
      <i className="h-[3px] w-[10px] rounded-t-full bg-[#9ed2a0]" />
      <i className="h-[3px] w-[12px] bg-[#24509b]" />
      <i className="h-[3px] w-[20px] rounded-t-full bg-[#d6c565]" />
      <i className="h-[3px] w-[20px] bg-[#eef3f8]" />
      <i className="h-[3px] w-[20px] rounded-t bg-[#efbd25]" />
      <i className="h-[3px] w-[22px] rounded-t bg-[#dd3028]" />
      <span className="flex h-full gap-[6px]">
        <i className="w-[40px] bg-[#c4cdd9]" />
        <span className="flex w-[44px] items-end justify-center bg-[#dbe6ed]"><i className="h-[2px] w-[21px] bg-[#1c8c78]" /></span>
      </span>
    </footer>
  );
}

function Logo() {
  return (
    <div className="absolute right-0 bottom-0 flex h-[127px] w-[254px] items-center bg-white pl-[21px]">
      <svg viewBox="0 0 72 60" className="h-[60px] w-[70px] shrink-0">
        <path d="M8 24C15 6 43-3 58 5c10 5 11 14 7 22 1-9-2-15-9-18C42 3 20 10 8 24z" fill="#97c52c" />
        <path d="M37 8l13 6v7l-9 3v20h-4zM54 21l9 5-2 11-8 4z" fill="#d3d5d9" />
        <path d="M7 35l11-6v15H9zM23 14l13-7v38l-13 2z" fill="#2454a4" />
        <path d="M42 24l11-4v20l-11 5z" fill="#2454a4" />
        <path d="M3 31c-3 9 1 18 14 19 20 2 44-12 51-27-1 16-20 31-42 33C7 57-4 45 3 31z" fill="#1b4697" />
      </svg>
      <div className="pt-[2px] whitespace-nowrap text-[#151515]">
        <div className="font-['Noto_Sans_CJK_SC',sans-serif] text-[28px] leading-[26px] font-black">土木工程网</div>
        <div className="font-['Open_Sans'] text-[18px] leading-5 font-semibold italic">www.civilcn.com</div>
      </div>
    </div>
  );
}

export default function App() {
  return (
    <div className="relative flex h-screen flex-col overflow-hidden bg-[#ececec] font-['Open_Sans','Noto_Sans_CJK_SC',sans-serif]">
      <TitleBar />
      <MenuBar />
      <Toolbar />
      <div className="flex min-h-0 flex-1 border-l border-[#c9c9c9]">
        <Canvas />
        <Dashboard />
      </div>
      <CommandLine />
      <StatusBar />
      <Taskbar />

      {/* pointer drawn over the command prompt */}
      <svg viewBox="0 0 88 76" className="pointer-events-none absolute bottom-[33px] left-[70px] h-[76px] w-[88px]">
        <path d="M88 0L9 66l-3-3-5 13 16-1-1-4z" fill="#f03c3c" />
      </svg>
      <Logo />
    </div>
  );
}
